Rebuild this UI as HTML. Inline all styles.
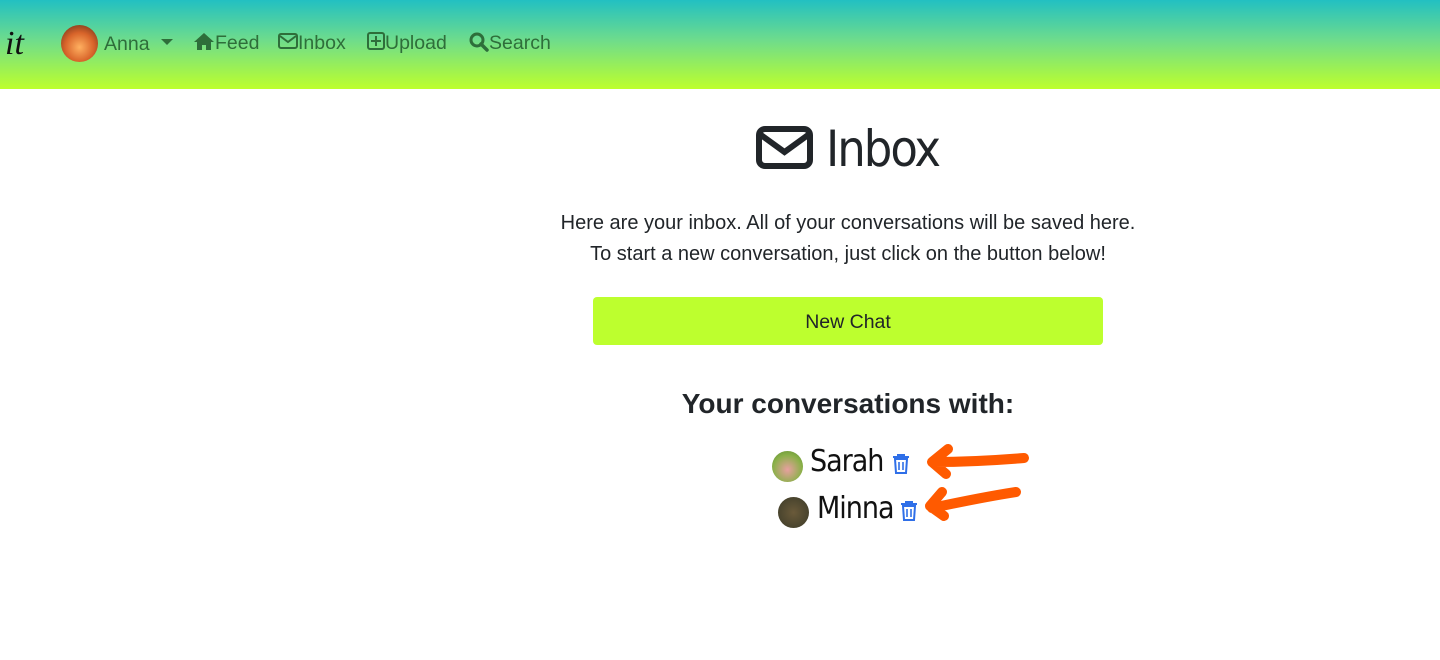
<!DOCTYPE html>
<html><head><style>
body{margin:0;width:1440px;height:660px;background:#fff;font-family:"Liberation Sans",sans-serif;color:#212529;position:relative;overflow:hidden}
.nav{position:absolute;left:0;top:0;width:1440px;height:89px;background:linear-gradient(#22c0c2,#6edc8c 45%,#bdff2c)}
.n{position:absolute;top:31px;font-size:19.5px;color:#2e6e3a;line-height:24px}
.abs{position:absolute}
</style></head><body>
<div class="nav">
<div class="n" style="left:-12px;top:24px;font-family:'Liberation Serif',serif;font-style:italic;font-size:34px;color:#111;line-height:40px">, it</div>
<div class="abs" style="left:61px;top:25px;width:37px;height:37px;border-radius:50%;background:radial-gradient(circle at 50% 60%,#ffb060,#d8642a 50%,#5a2a18)"></div>
<div class="n" style="left:104px;top:32px">Anna</div>
<div class="abs" style="left:161px;top:39px;border-left:6px solid transparent;border-right:6px solid transparent;border-top:6px solid #2e6e3a"></div>
<svg class="abs" style="left:193px;top:32px" width="22" height="18" viewBox="0 0 22 18"><path d="M11 1L1 10h3v8h5v-5h4v5h5v-8h3z" fill="#2e6e3a"/></svg>
<div class="n" style="left:215px">Feed</div>
<svg class="abs" style="left:278px;top:33px" width="20" height="16"><rect x="1" y="1" width="18" height="14" rx="2" fill="none" stroke="#2e6e3a" stroke-width="2"/><path d="M2 3l8 6 8-6" fill="none" stroke="#2e6e3a" stroke-width="2"/></svg>
<div class="n" style="left:298px">Inbox</div>
<svg class="abs" style="left:367px;top:32px" width="18" height="18"><rect x="1" y="1" width="16" height="16" rx="2" fill="none" stroke="#2e6e3a" stroke-width="2"/><path d="M9 4v10M4 9h10" stroke="#2e6e3a" stroke-width="2"/></svg>
<div class="n" style="left:385px">Upload</div>
<svg class="abs" style="left:469px;top:32px" width="20" height="20"><circle cx="8" cy="8" r="6" fill="none" stroke="#2e6e3a" stroke-width="3"/><path d="M12 12l6 6" stroke="#2e6e3a" stroke-width="3.5" stroke-linecap="round"/></svg>
<div class="n" style="left:489px">Search</div>
</div>
<svg class="abs" style="left:756px;top:126px" width="57" height="43"><rect x="3" y="3" width="51" height="37" rx="6" fill="none" stroke="#212529" stroke-width="6"/><path d="M5 9l23.5 17L52 9" fill="none" stroke="#212529" stroke-width="6"/></svg>
<div class="abs" style="left:826px;top:120px;font-size:50px;font-family:'DejaVu Sans Condensed','DejaVu Sans',sans-serif;letter-spacing:-2px">Inbox</div>
<div class="abs" style="left:448px;width:800px;top:208px;text-align:center;font-size:20px;line-height:31px">Here are your inbox. All of your conversations will be saved here.<br>To start a new conversation, just click on the button below!</div>
<div class="abs" style="left:593px;top:297px;width:510px;height:48px;background:#bdff2e;border-radius:4px;text-align:center;line-height:50px;font-size:19.5px">New Chat</div>
<div class="abs" style="left:448px;width:800px;top:388px;text-align:center;font-size:28px;font-weight:bold">Your conversations with:</div>
<div class="abs" style="left:772px;top:451px;width:31px;height:31px;border-radius:50%;background:radial-gradient(circle at 50% 60%,#e8a0a0,#8ab048 60%,#5c8a30)"></div>
<div class="abs" style="left:810px;top:444px;font-size:30px;font-family:'DejaVu Sans Condensed',sans-serif;color:#111;letter-spacing:-1px">Sarah</div>
<div class="abs" style="left:778px;top:497px;width:31px;height:31px;border-radius:50%;background:radial-gradient(circle,#6a5a3a,#3a3a28)"></div>
<div class="abs" style="left:817px;top:491px;font-size:30px;font-family:'DejaVu Sans Condensed',sans-serif;color:#111;letter-spacing:-1px">Minna</div>
<svg class="abs" style="left:892px;top:454px" width="18" height="20"><path d="M1 3h16M6 3V1h6v2M3 5h12l-1 14H4z" fill="none" stroke="#2f6fe8" stroke-width="2"/><path d="M7 8v8M11 8v8" stroke="#2f6fe8" stroke-width="1.6"/></svg>
<svg class="abs" style="left:900px;top:501px" width="18" height="20"><path d="M1 3h16M6 3V1h6v2M3 5h12l-1 14H4z" fill="none" stroke="#2f6fe8" stroke-width="2"/><path d="M7 8v8M11 8v8" stroke="#2f6fe8" stroke-width="1.6"/></svg>
<svg class="abs" style="left:920px;top:440px" width="120" height="90"><g fill="none" stroke="#ff5a00" stroke-width="10" stroke-linecap="round" stroke-linejoin="round"><path d="M104 18C80 20 50 22 14 22M28 9L12 22 26 34"/><path d="M96 52C70 56 40 62 12 68M22 52L10 66 24 76"/></g></svg>
</body></html>
